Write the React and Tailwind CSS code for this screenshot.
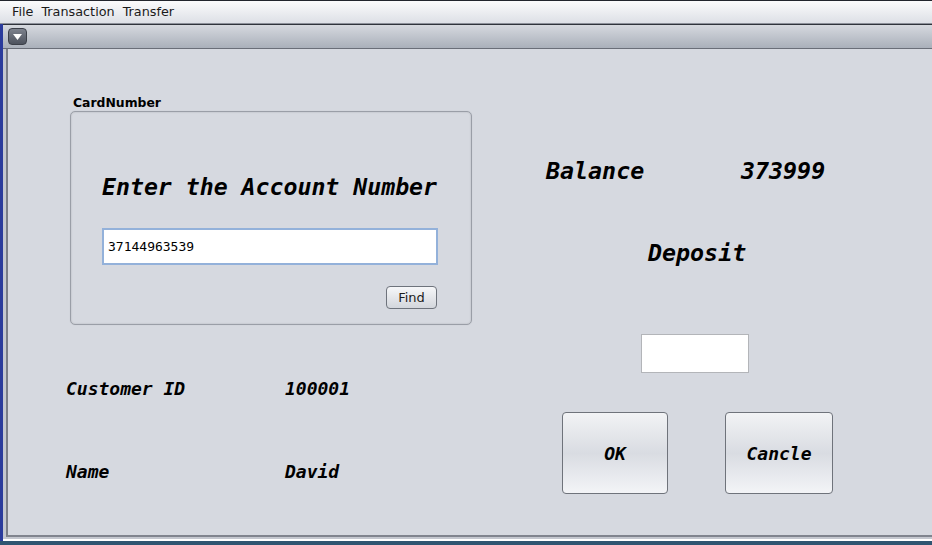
import React, { useState } from 'react';

const mono = { fontFamily: '"DejaVu Sans Mono", "Liberation Mono", monospace' };
const sans = { fontFamily: '"DejaVu Sans", "Liberation Sans", sans-serif' };

const BigButton = ({ label, width }) => (
  <button
    type="button"
    className={`${width} h-[82px] rounded-[4px] border border-[#6f737b] bg-linear-to-b from-[#f2f3f5] via-[#d9dce2] to-[#f3f4f7] text-[18px] font-bold italic text-black`}
    style={mono}
  >
    {label}
  </button>
);

const App = () => {
  const [cuenta, setCuenta] = useState('37144963539');
  const [deposito, setDeposito] = useState('');

  return (
    <div className="w-[932px] h-[545px] flex flex-col bg-[#2f5571] overflow-hidden">
      {/* barra de menu */}
      <div
        className="h-[24px] shrink-0 flex items-center gap-[8px] pl-[12px] border-t border-[#22252d] border-b border-b-[#8c9099] bg-linear-to-b from-[#fbfbfc] to-[#dde0e6] text-[12.8px] text-[#1a1a1a]"
        style={sans}
      >
        <span>File</span>
        <span>Transaction</span>
        <span>Transfer</span>
      </div>

      <div className="flex-1 flex min-h-0">
        <div className="w-[3px] bg-[#2a3b9c]" />

        {/* ventana interna */}
        <div className="flex-1 flex flex-col border-t border-[#2f333b] bg-[#c4c7cf] pb-[2px] border-b-2 border-b-white">
          <div className="h-[24px] shrink-0 flex items-center pl-[5px] bg-linear-to-b from-[#d6d9df] to-[#aab0ba] border-b border-[#6a6e78]">
            <div className="w-[19px] h-[17px] rounded-[4px] bg-linear-to-b from-[#7d828d] to-[#4e535e] border border-[#3c4049] flex items-center justify-center">
              <svg width="9" height="6" viewBox="0 0 9 6">
                <path d="M0 0 L9 0 L4.5 6 Z" fill="#fff" />
              </svg>
            </div>
          </div>

          <div className="flex-1 flex pl-[3px]">
            <div className="flex-1 flex bg-[#d6d9e0] border-l-2 border-[#7a7e88] border-b-2 border-b-[#80848e]">
              {/* columna izquierda */}
              <div className="flex flex-col pl-[58px]">
                <div className="ml-[7px] mt-[47px] text-[12.4px] leading-[14px] font-bold text-black" style={sans}>
                  CardNumber
                </div>
                <div className="ml-[4px] mt-[1px] w-[402px] h-[214px] rounded-[5px] border border-[#9a9ea7] shadow-[inset_0_0_2px_rgba(0,0,0,0.18),0_0_1px_rgba(0,0,0,0.15)] flex flex-col px-[31px] pt-[61px]">
                  <div className="text-[23.2px] leading-[28px] font-bold italic text-black whitespace-nowrap" style={mono}>
                    Enter the Account Number
                  </div>
                  <input
                    value={cuenta}
                    onChange={(e) => setCuenta(e.target.value)}
                    className="mt-[27px] w-[336px] h-[37px] bg-white border-2 border-[#93b1da] px-[4px] text-[13px] text-black outline-none"
                    style={mono}
                  />
                  <button
                    type="button"
                    className="self-end mr-[3px] mt-[21px] w-[51px] h-[23px] rounded-[4px] border border-[#6e737c] bg-linear-to-b from-[#f6f7f9] to-[#d3d6dc] text-[13px] text-[#1c1c1c]"
                    style={sans}
                  >
                    Find
                  </button>
                </div>

                <div className="mt-[53px] flex text-[18px] leading-[22px] font-bold italic text-black" style={mono}>
                  <span className="w-[219px]">Customer ID</span>
                  <span>100001</span>
                </div>
                <div className="mt-[61px] flex text-[18px] leading-[22px] font-bold italic text-black" style={mono}>
                  <span className="w-[219px]">Name</span>
                  <span>David</span>
                </div>
              </div>

              {/* columna derecha */}
              <div className="flex flex-col">
                <div className="ml-[74px] mt-[108px] flex text-[23.3px] leading-[28px] font-bold italic text-black" style={mono}>
                  <span className="w-[195px]">Balance</span>
                  <span>373999</span>
                </div>
                <div className="ml-[176px] mt-[54px] text-[23.3px] leading-[28px] font-bold italic text-black" style={mono}>
                  Deposit
                </div>
                <input
                  value={deposito}
                  onChange={(e) => setDeposito(e.target.value)}
                  className="ml-[169px] mt-[67px] w-[108px] h-[39px] bg-white border border-[#b3b5b9] px-[4px] text-[13px] outline-none"
                  style={mono}
                />
                <div className="ml-[90px] mt-[39px] flex gap-[57px]">
                  <BigButton label="OK" width="w-[106px]" />
                  <BigButton label="Cancle" width="w-[108px]" />
                </div>
              </div>
            </div>
          </div>
        </div>
      </div>
      <div className="h-[4px] shrink-0" />
    </div>
  );
};

export default App;
